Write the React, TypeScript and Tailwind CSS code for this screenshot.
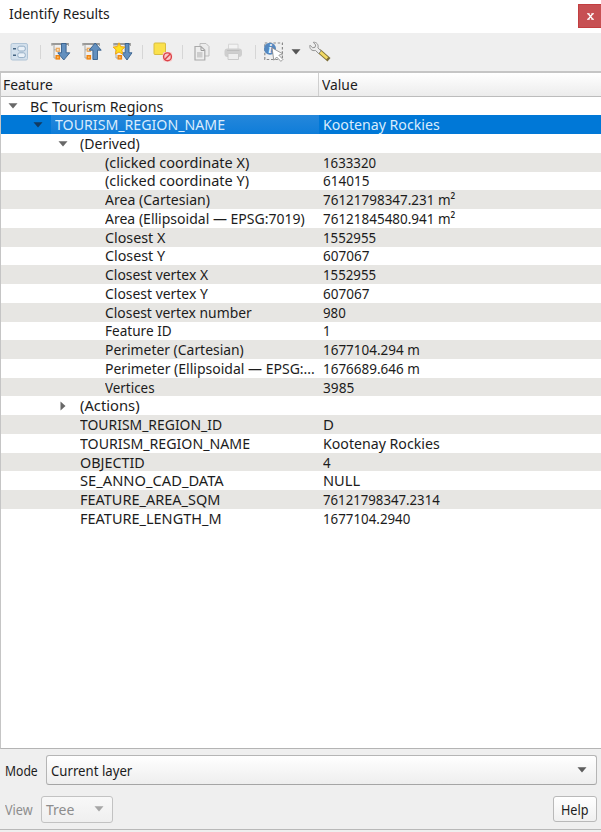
import { useLayoutEffect, useRef, useState } from "react";
import type { ReactNode } from "react";

/** Text condensed horizontally so that it fills the given width. */
function Label({ children, w }: { children: string; w: number }) {
  const ref = useRef<HTMLSpanElement>(null);
  const [scale, setScale] = useState(1);
  useLayoutEffect(() => {
    if (ref.current) setScale(w / ref.current.offsetWidth);
  }, [w]);
  return (
    <span ref={ref} className="inline-block origin-left whitespace-nowrap" style={{ transform: `scaleX(${scale})` }}>
      {children}
    </span>
  );
}

type Row = { level: 0 | 1 | 2 | 3; name: string; nw: number; value?: string; vw?: number; arrow?: "open" | "closed"; selected?: boolean };

const rows: Row[] = [
  { level: 0, name: "BC Tourism Regions", nw: 133, arrow: "open" },
  { level: 1, name: "TOURISM_REGION_NAME", nw: 170, value: "Kootenay Rockies", vw: 117, arrow: "open", selected: true },
  { level: 2, name: "(Derived)", nw: 60, arrow: "open" },
  { level: 3, name: "(clicked coordinate X)", nw: 144, value: "1633320", vw: 53 },
  { level: 3, name: "(clicked coordinate Y)", nw: 144, value: "614015", vw: 46 },
  { level: 3, name: "Area (Cartesian)", nw: 105, value: "76121798347.231 m²", vw: 132 },
  { level: 3, name: "Area (Ellipsoidal — EPSG:7019)", nw: 200, value: "76121845480.941 m²", vw: 132 },
  { level: 3, name: "Closest X", nw: 60, value: "1552955", vw: 53 },
  { level: 3, name: "Closest Y", nw: 60, value: "607067", vw: 46 },
  { level: 3, name: "Closest vertex X", nw: 103, value: "1552955", vw: 53 },
  { level: 3, name: "Closest vertex Y", nw: 103, value: "607067", vw: 46 },
  { level: 3, name: "Closest vertex number", nw: 147, value: "980", vw: 23 },
  { level: 3, name: "Feature ID", nw: 67, value: "1", vw: 8 },
  { level: 3, name: "Perimeter (Cartesian)", nw: 139, value: "1677104.294 m", vw: 97 },
  { level: 3, name: "Perimeter (Ellipsoidal — EPSG:...", nw: 210, value: "1676689.646 m", vw: 97 },
  { level: 3, name: "Vertices", nw: 50, value: "3985", vw: 31 },
  { level: 2, name: "(Actions)", nw: 60, arrow: "closed" },
  { level: 2, name: "TOURISM_REGION_ID", nw: 142, value: "D", vw: 11 },
  { level: 2, name: "TOURISM_REGION_NAME", nw: 170, value: "Kootenay Rockies", vw: 117 },
  { level: 2, name: "OBJECTID", nw: 65, value: "4", vw: 8 },
  { level: 2, name: "SE_ANNO_CAD_DATA", nw: 144, value: "NULL", vw: 37 },
  { level: 2, name: "FEATURE_AREA_SQM", nw: 140, value: "76121798347.2314", vw: 117 },
  { level: 2, name: "FEATURE_LENGTH_M", nw: 142, value: "1677104.2940", vw: 87 },
];

const indent = ["pl-[7px]", "pl-[32px]", "pl-[57px]", "pl-[82px]"];

function Caret({ className = "", fill = "#666" }: { className?: string; fill?: string }) {
  return (
    <svg viewBox="0 0 10 6" className={`h-[6px] w-[10px] shrink-0 ${className}`}>
      <path d="M.5 .3h9L5 5.6z" fill={fill} />
    </svg>
  );
}

function TreeRow({ row, index }: { row: Row; index: number }) {
  const bg = row.selected ? "bg-[#0078d7] text-[#d9ecfd]" : index % 2 === 1 ? "bg-[#e7e6e3]" : "bg-white";
  const nameBg = row.selected ? "bg-linear-to-b from-[#2487db] to-[#0d7dd9]" : "";
  return (
    <div className={`flex h-[18.74px] shrink-0 items-center ${bg}`}>
      <div className={`flex h-full w-[318px] shrink-0 items-center ${indent[row.level]}`}>
        <span className="flex w-[18px] shrink-0 items-center">
          {row.arrow === "open" && <Caret fill={row.selected ? "#123a61" : "#686868"} />}
          {row.arrow === "closed" && (
            <svg viewBox="0 0 6 10" className="ml-[2px] h-[10px] w-[6px]">
              <path d="M.5 .5v9L5.5 5z" fill="#686868" />
            </svg>
          )}
        </span>
        <span className={`flex h-full grow items-center pl-[3.5px] ${nameBg}`}>
          <span className="-mt-[1px]"><Label w={row.nw}>{row.name}</Label></span>
        </span>
      </div>
      <div className="-mt-[1px] pl-[4px]">{row.value && <Label w={row.vw ?? 0}>{row.value}</Label>}</div>
    </div>
  );
}

function Icon({ children, className }: { children: ReactNode; className: string }) {
  return (
    <svg viewBox="0 0 20 20" className={`h-[20px] w-[20px] shrink-0 ${className}`} fill="none">
      {children}
    </svg>
  );
}

function Sep({ className }: { className: string }) {
  return <span className={`h-[14px] w-px shrink-0 bg-[#d6d6d6] ${className}`} />;
}

function TreeGlyph() {
  return (
    <>
      <path d="M.5 2h17.5" stroke="#858583" strokeWidth="1.6" />
      <path d="M1 1v3M17.5 1v3" stroke="#a5a5a3" />
      <path d="M3 3v13H5M3 7.8H5" stroke="#a8a8a6" />
      <rect x="5.3" y="6.3" width="3" height="3" fill="#fbe3bf" stroke="#eda85a" strokeWidth="1.2" />
      <rect x="5.2" y="13.7" width="3.2" height="3.2" fill="#fbb964" stroke="#ef8410" strokeWidth="1.4" />
    </>
  );
}

function Toolbar() {
  return (
    <div className="flex h-[38px] shrink-0 items-center bg-[#efefef]">
      <Icon className="ml-[9px]">
        <rect x="2" y="1.5" width="16.5" height="16.5" rx="1.5" fill="#d3e0ec" stroke="#b0c4d6" />
        <path d="M4 6.7h3M4 13.2h3" stroke="#456482" strokeWidth="1.5" />
        <rect x="8.8" y="4.2" width="7.5" height="4.8" rx="2" fill="#eaf1f8" stroke="#93adc5" />
        <rect x="8.8" y="10.8" width="7.5" height="4.8" rx="2" fill="#eaf1f8" stroke="#93adc5" />
      </Icon>
      <Sep className="ml-[11px]" />
      <Icon className="ml-[10px]">
        <TreeGlyph />
        <path d="M10.2 1.5h4.6v9.3h3.7L12.5 18 6.5 10.8h3.7z" transform="translate(.3)" fill="#6390bf" stroke="#345f8c" strokeWidth=".9" />
      </Icon>
      <Icon className="ml-[11px]">
        <TreeGlyph />
        <path d="M10.9 17.5h4.6V8.2h3.7L13.2 1 7.2 8.2h3.7z" fill="#6390bf" stroke="#345f8c" strokeWidth=".9" />
      </Icon>
      <Icon className="ml-[11px]">
        <TreeGlyph />
        <path d="M12.2 1.5h3.8v9.3h3L14 18l-5.2-7.2h3.4z" fill="#6390bf" stroke="#345f8c" strokeWidth=".9" />
        <path d="m6 .8 1.7 3.8 4.2.5-3.1 2.8.8 4.2L6 10l-3.6 2.1.8-4.2L.1 5.1l4.2-.5z" fill="#ffe01e" stroke="#f0a51c" strokeWidth="1" strokeLinejoin="round" />
      </Icon>
      <Sep className="ml-[9px]" />
      <Icon className="ml-[10px] overflow-visible">
        <rect x="1" y="1" width="11.5" height="11.5" rx="1" fill="#fbe14c" stroke="#d8bd40" />
        <rect x="9.8" y="10" width="9.4" height="9.4" rx="2" fill="#f7caca" />
        <circle cx="14.5" cy="14.8" r="3.9" stroke="#dc4248" strokeWidth="1.4" />
        <path d="m11.8 17.6 5.4-5.5" stroke="#dc4248" strokeWidth="1.4" />
      </Icon>
      <Sep className="ml-[9px]" />
      <Icon className="ml-[10px]">
        <path d="M7 1.5h6l3 3V14H7z" fill="#ececec" stroke="#bdbdbd" />
        <path d="M2 4.5h6L11.8 8v10H2z" fill="#eee" stroke="#aaa" strokeWidth="1.2" />
        <path d="M8 4.8V8.5h3.5" stroke="#999" />
        <rect x="4" y="10" width="5.5" height="5.5" fill="#cdcdcd" />
      </Icon>
      <Icon className="ml-[11px]">
        <path d="M4.5 8V2.2h9.5V8" fill="#f3f3f3" stroke="#d6d6d6" />
        <rect x=".5" y="6.5" width="17.5" height="8.5" rx="3" fill="#cecece" />
        <path d="M4 11.5h10.5v6H4z" fill="#eee" stroke="#cacaca" />
        <path d="M3 8.5h12.5" stroke="#bdbdbd" />
      </Icon>
      <Sep className="ml-[11px]" />
      <Icon className="ml-[8px] overflow-visible">
        <rect x=".8" y="1" width="17.6" height="16.5" stroke="#8a8a8a" strokeWidth="1.2" strokeDasharray="2.5 1.8" />
        <circle cx="6" cy="6.8" r="6" fill="#5588bf" />
        <text x="6" y="11.2" textAnchor="middle" fill="#eef6ff" className="[font-family:'Liberation_Serif',serif] text-[13px] font-bold italic">i</text>
        <path d="m8 5.8 1.8 12.4 2.9-3.2 4.2 4.4 2-2-4.1-4.2 4-1.3z" fill="#fff" stroke="#858585" strokeWidth=".8" />
      </Icon>
      <Caret className="ml-[7px]" fill="#555" />
      <Icon className="ml-[8px] overflow-visible">
        <path d="m10 9 10 8.7" stroke="#7d6f38" strokeWidth="4.5" />
        <path d="m11.3 10.1 7 6.1" stroke="#f1d965" strokeWidth="2.8" />
        <path d="M1 3.2c-1 3.4 2 6.3 5.4 5.2l3.2 3.1 2.5-2.6-3.2-3C10 2.7 7.4-.2 4.3.3L6.7 3 6 5.3l-2.4.5z" fill="#ededed" stroke="#949494" />
      </Icon>
    </div>
  );
}

export default function App() {
  return (
    <div className="flex h-[832px] w-[601px] flex-col overflow-hidden bg-[#efefef] text-[15px] leading-[18px] text-[#1c1c1c] [font-family:'Noto_Sans','Open_Sans',sans-serif]">
      <header className="flex h-[33px] shrink-0 items-start justify-between bg-white pl-[9px]">
        <div className="mt-[4px]"><Label w={101}>Identify Results</Label></div>
        <button className="mt-[4px] flex h-[24px] w-[23px] items-center justify-center border border-r-0 border-[#c23e40] bg-[#c75053]">
          <svg viewBox="0 0 8 8" className="h-[7px] w-[7px]">
            <path d="M0 .8h3M5 .8h3M0 7.2h3M5 7.2h3" stroke="#fff" strokeWidth="1.2" />
            <path d="m1.6 1 4.8 6M6.4 1 1.6 7" stroke="#fff" strokeWidth="1.7" />
          </svg>
        </button>
      </header>
      <Toolbar />
      <main className="flex h-[678px] shrink-0 flex-col border-t-2 border-b border-l border-[#c5c5c5] border-b-[#b4b4b4] bg-white">
        <div className="flex h-[23.7px] shrink-0 items-center border-b border-[#bcbcbc] bg-linear-to-b from-white to-[#ececec]">
          <div className="flex h-full w-[318px] items-center border-r border-[#cfcfcf] pl-[2px]"><Label w={50}>Feature</Label></div>
          <div className="pl-[3px]"><Label w={36}>Value</Label></div>
        </div>
        {rows.map((row, i) => <TreeRow key={i} row={row} index={i} />)}
      </main>
      <footer className="flex h-[83px] shrink-0 flex-col">
        <div className="mt-[6px] flex h-[30px] items-center pl-[5px]">
          <div className="w-[41px] shrink-0 pt-[2px] text-[14px]"><Label w={33}>Mode</Label></div>
          <button className="flex h-[30px] w-[551px] items-center justify-between rounded-[3px] border border-[#b5b5b5] border-b-[#a5a5a5] bg-linear-to-b from-white to-[#eeeeee] pr-[9px] pl-[4px] text-[14px]">
            <span className="pt-[2px]"><Label w={81}>Current layer</Label></span>
            <Caret fill="#5d5d5d" />
          </button>
        </div>
        <div className="mt-[10px] flex h-[28px] items-center pl-[5px] text-[14px] text-[#8d8d8d]">
          <div className="w-[36px] shrink-0 pt-[2px]"><Label w={28}>View</Label></div>
          <button className="flex h-[27px] w-[72px] items-center justify-between rounded-[3px] border border-[#c2c2c2] bg-linear-to-b from-[#f8f8f8] to-[#efefef] pr-[8px] pl-[4px]">
            <span className="pt-[2px]"><Label w={28}>Tree</Label></span>
            <Caret fill="#a6a6a6" />
          </button>
          <button className="mr-[4px] ml-auto flex h-[26px] w-[44px] items-center rounded-[3px] border border-[#b9b9b9] bg-linear-to-b from-white to-[#f0f0f0] pt-[2px] pl-[7px] text-[#1c1c1c]">
            <Label w={28}>Help</Label>
          </button>
        </div>
        <div className="mt-[6px] h-px bg-[#b8b8b8]" />
      </footer>
    </div>
  );
}
